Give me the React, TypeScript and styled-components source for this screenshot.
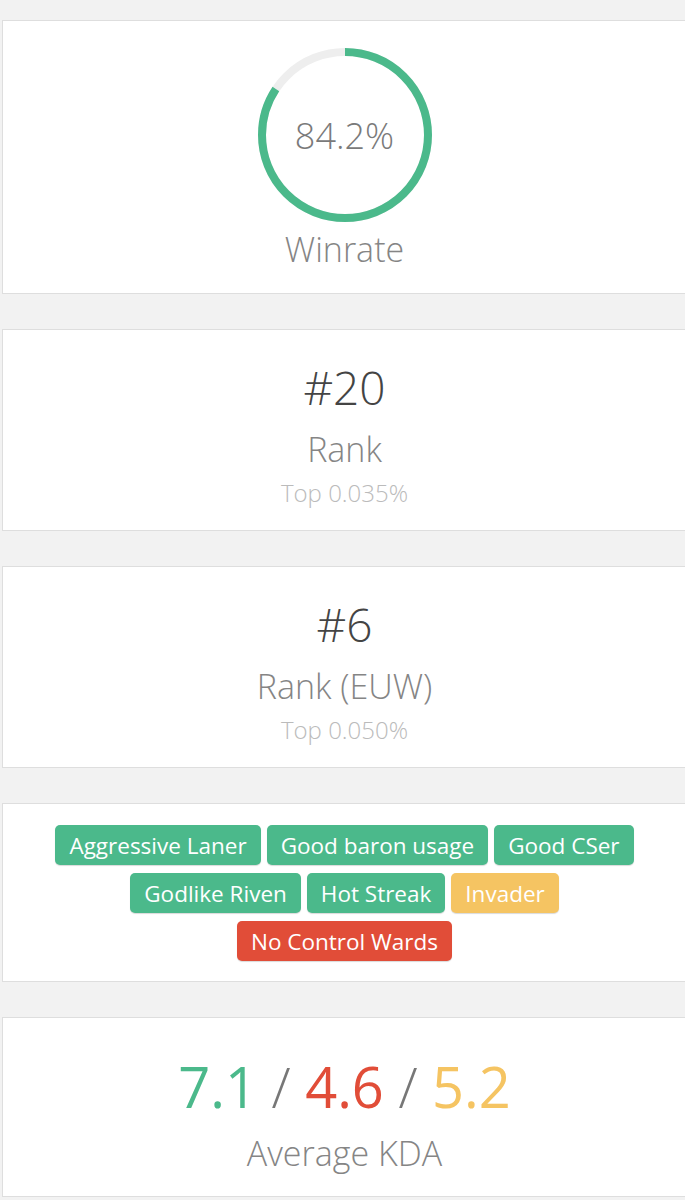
import React from "react";
import styled, { createGlobalStyle } from "styled-components";

type Tag = { label: string; kind: "good" | "neutral" | "bad" };

const tags: Tag[] = [
  { label: "Aggressive Laner", kind: "good" },
  { label: "Good baron usage", kind: "good" },
  { label: "Good CSer", kind: "good" },
  { label: "Godlike Riven", kind: "good" },
  { label: "Hot Streak", kind: "good" },
  { label: "Invader", kind: "neutral" },
  { label: "No Control Wards", kind: "bad" },
];

const tagColors = {
  good: "#4bb98b",
  neutral: "#f5c462",
  bad: "#e14d38",
};

const WinrateRing = ({ value }: { value: number }) => {
  const r = 83;
  const c = 2 * Math.PI * r;
  return (
    <SRing>
      <svg width="176" height="176" viewBox="0 0 176 176">
        <circle cx="88" cy="88" r={r} fill="none" stroke="#eeeeee" strokeWidth="8" />
        <circle
          cx="88"
          cy="88"
          r={r}
          fill="none"
          stroke="#4bb98b"
          strokeWidth="8"
          strokeDasharray={`${(c * value) / 100} ${c}`}
          transform="rotate(-90 88 88)"
        />
      </svg>
      <SRingValue>{value}%</SRingValue>
    </SRing>
  );
};

const App = () => {
  return (
    <>
      <GlobalStyle />
      <SPage>
        <SCard>
          <SWinrateBody>
            <WinrateRing value={84.2} />
            <SLabel>Winrate</SLabel>
          </SWinrateBody>
        </SCard>

        <SCard>
          <SRankBody>
            <SRankNumber>#20</SRankNumber>
            <SLabel>Rank</SLabel>
            <SSub>Top 0.035%</SSub>
          </SRankBody>
        </SCard>

        <SCard>
          <SRankBody>
            <SRankNumber>#6</SRankNumber>
            <SLabel>Rank (EUW)</SLabel>
            <SSub>Top 0.050%</SSub>
          </SRankBody>
        </SCard>

        <SCard>
          <STagList>
            {tags.map((t) => (
              <STag key={t.label} kind={t.kind}>
                {t.label}
              </STag>
            ))}
          </STagList>
        </SCard>

        <SCard>
          <SKdaBody>
            <SKda>
              <SKdaPart color="#4bb98b">7.1</SKdaPart>
              <SSlash> / </SSlash>
              <SKdaPart color="#e14d38">4.6</SKdaPart>
              <SSlash> / </SSlash>
              <SKdaPart color="#f5c462">5.2</SKdaPart>
            </SKda>
            <SKdaLabel>Average KDA</SKdaLabel>
          </SKdaBody>
        </SCard>
      </SPage>
    </>
  );
};

const GlobalStyle = createGlobalStyle`
  html, body {
    margin: 0;
    padding: 0;
    background: #f2f2f2;
    overflow-x: hidden;
  }
  body {
    font-family: "Open Sans", "Noto Sans", sans-serif;
    font-weight: 300;
  }
`;

const SPage = styled.div`
  display: flex;
  flex-direction: column;
  gap: 35px;
  padding: 20px 0 0 2px;
`;

const SCard = styled.div`
  width: 700px;
  background: #ffffff;
  border: 1px solid #dedede;
  box-sizing: border-box;
  display: flex;
  justify-content: flex-start;
`;

const SColumn = styled.div`
  width: 683px;
  display: flex;
  flex-direction: column;
  align-items: center;
  text-align: center;
`;

const SWinrateBody = styled(SColumn)`
  height: 272px;
  padding-top: 26px;
  box-sizing: border-box;
`;

const SRing = styled.div`
  position: relative;
  width: 176px;
  height: 176px;
  margin-bottom: 3px;

  svg {
    display: block;
  }
`;

const SRingValue = styled.div`
  position: absolute;
  inset: 0;
  display: flex;
  align-items: center;
  justify-content: center;
  font-size: 36px;
  color: #7a7a7a;
`;

const SLabel = styled.div`
  font-size: 34px;
  line-height: 46px;
  color: #858585;
`;

const SRankBody = styled(SColumn)`
  height: 200px;
  padding-top: 29px;
  box-sizing: border-box;
`;

const SRankNumber = styled.div`
  font-size: 46px;
  line-height: 56px;
  color: #444444;
  margin-bottom: 11px;
`;

const SSub = styled.div`
  font-size: 24px;
  line-height: 32px;
  color: #bbbbbb;
  margin-top: 5px;
`;

const STagList = styled.div`
  width: 683px;
  height: 177px;
  box-sizing: border-box;
  padding: 21px 40px 0;
  display: flex;
  flex-wrap: wrap;
  justify-content: center;
  align-content: flex-start;
  gap: 8px 6px;
`;

const STag = styled.span<{ kind: Tag["kind"] }>`
  display: inline-flex;
  align-items: center;
  height: 40px;
  padding: 0 14px;
  border-radius: 5px;
  background: ${(p) => tagColors[p.kind]};
  box-shadow: 0 1px 1px rgba(0, 0, 0, 0.15);
  color: #ffffff;
  font-size: 22.5px;
  font-weight: 400;
  white-space: nowrap;
  box-sizing: border-box;
`;

const SKdaBody = styled(SColumn)`
  height: 178px;
  padding-top: 32px;
  box-sizing: border-box;
`;

const SKda = styled.div`
  font-size: 56px;
  line-height: 72px;
  font-weight: 400;
`;

const SKdaLabel = styled(SLabel)`
  margin-top: 8px;
`;

const SKdaPart = styled.span<{ color: string }>`
  color: ${(p) => p.color};
`;

const SSlash = styled.span`
  color: #777777;
  font-weight: 300;
`;

export default App;
